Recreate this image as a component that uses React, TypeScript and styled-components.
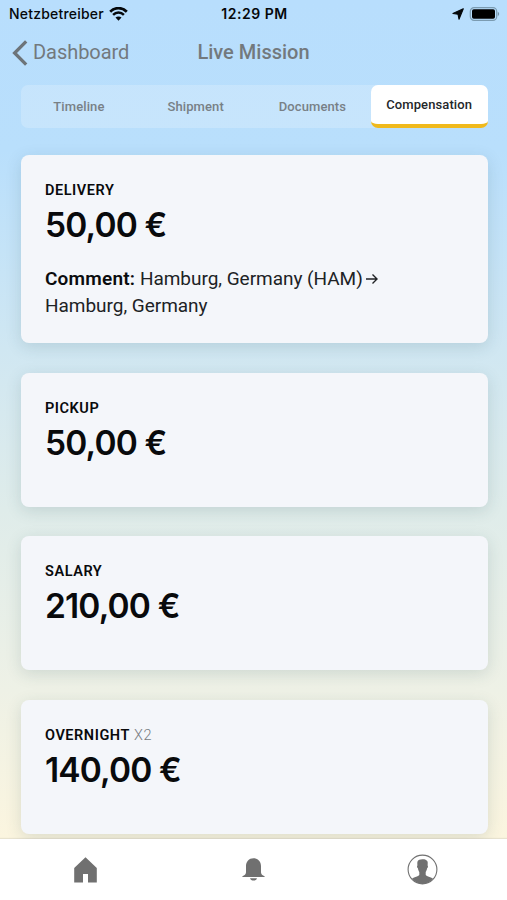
import React from 'react';
import styled, { createGlobalStyle } from 'styled-components';

const GlobalStyle = createGlobalStyle`
  * { box-sizing: border-box; }
  html, body { margin: 0; padding: 0; overflow: hidden; }
  button { border: 0; padding: 0; margin: 0; background: none; font: inherit; color: inherit; }
`;

const Screen = styled.div`
  display: flex;
  flex-direction: column;
  width: 507px;
  height: 900px;
  overflow: hidden;
  font-family: Roboto, "Liberation Sans", sans-serif;
  color: #090a0c;
  background: linear-gradient(180deg, #b8defd 0, #b9dffc 150px, #d0e7f2 350px, #dfecea 510px, #eef1e6 690px, #fbf5df 838px);
`;

const StatusBar = styled.div`
  display: grid;
  grid-template-columns: 1fr auto 1fr;
  align-items: center;
  flex: none;
  height: 28px;
  padding: 0 7px 0 9px;
  font-family: Inter, sans-serif;
  font-size: 14px;
  line-height: 28px;
  color: #05080b;
`;

const Carrier = styled.div`
  display: flex;
  align-items: center;
  gap: 5px;
  letter-spacing: 0.2px;
  font-weight: 450;
`;

const Clock = styled.div`
  font-weight: 600;
  letter-spacing: 0.5px;
`;

const Indicators = styled.div`
  display: flex;
  align-items: center;
  justify-content: flex-end;
  gap: 5px;
`;

const NavBar = styled.header`
  display: grid;
  grid-template-columns: 1fr auto 1fr;
  align-items: center;
  flex: none;
  height: 49px;
  padding: 0 12px;
  font-size: 20px;
  line-height: 49px;
  color: #73797d;
`;

const Back = styled.button`
  display: flex;
  align-items: center;
  gap: 5px;
  letter-spacing: -0.05px;
`;

const Title = styled.h1`
  margin: 0;
  font-size: 20px;
  font-weight: 500;
  letter-spacing: 0;
`;

const Tabs = styled.nav`
  display: grid;
  grid-template-columns: repeat(4, 1fr);
  flex: none;
  height: 43px;
  margin: 8px 19.5px 0 20.5px;
  border-radius: 7px;
  background: rgba(255, 255, 255, 0.2);
`;

const Tab = styled.button<{ $active?: boolean }>`
  height: 43px;
  border-radius: 7px;
  font-size: 13px;
  font-weight: 500;
  letter-spacing: 0.1px;
  line-height: 42px;
  color: #788086;
  ${({ $active }) => $active && `
    color: #24272a;
    line-height: 40px;
    background: #fff;
    border-bottom: 4px solid #f0b91c;
  `}
`;

const CardList = styled.main`
  display: flex;
  flex-direction: column;
  flex: 1;
  min-height: 0;
  gap: 29.7px;
  padding: 27px 19.5px 0 20.5px;
  overflow: hidden;
`;

const Card = styled.section<{ $tall?: boolean }>`
  flex: none;
  height: ${({ $tall }) => ($tall ? 188 : 134)}px;
  padding: 26px 24.5px 0;
  border-radius: 8px;
  background: #f4f6fa;
  box-shadow: 0 4px 16px rgba(35, 75, 80, 0.15);
`;

const Label = styled.h2`
  margin: 0;
  font-size: 14.5px;
  font-weight: 600;
  line-height: 20px;
  letter-spacing: 0.55px;
  white-space: pre;
`;

const Count = styled.span`
  font-weight: 300;
  color: #777b80;
`;

const Amount = styled.div`
  font-family: Inter, Roboto, sans-serif;
  font-size: 33.5px;
  font-weight: 600;
  line-height: 48px;
  letter-spacing: -0.85px;
`;

const Comment = styled.p`
  margin: 16px 0 0;
  width: 350px;
  font-size: 19px;
  line-height: 27px;
  letter-spacing: -0.03px;
  color: #202225;
`;

const CommentLabel = styled.b`
  font-weight: 600;
  letter-spacing: 0.2px;
  color: #0b0c0e;
`;

const TabBar = styled.footer`
  display: grid;
  grid-template-columns: repeat(3, 1fr);
  flex: none;
  height: 61px;
  padding-left: 1px;
  background: #fff;
  box-shadow: 0 -1px 1px rgba(100, 100, 100, 0.12);
  z-index: 1;
`;

const TabBarItem = styled.button`
  display: flex;
  align-items: center;
  justify-content: center;
  color: #707070;
`;

const ArrowGlyph = styled.svg`
  width: 12px;
  height: 12px;
  margin-left: -1px;
  vertical-align: 0;
`;

const Wifi = () => (
  <svg width="19" height="14" viewBox="0 0 19 14" fill="none" stroke="currentColor">
    <path d="M1.2 4.8C6-.1 13-.1 17.8 4.8" strokeWidth="2.7" />
    <path d="M4.1 7.9C7.2 4.8 11.8 4.8 14.9 7.9" strokeWidth="2.5" />
    <path d="M9.5 13.8 6.5 10.6C8.2 9 10.8 9 12.5 10.6Z" fill="currentColor" stroke="none" />
  </svg>
);

const Location = () => (
  <svg width="12" height="12" viewBox="0 0 12 12">
    <path d="M11.3.7 7 11.2 6 6.200.9 5.500Z" fill="currentColor" stroke="currentColor" strokeWidth="1.100" strokeLinejoin="round" />
  </svg>
);

const Battery = () => (
  <svg width="31" height="14" viewBox="0 0 31 14">
    <rect x="1.3" y=".6" width="26.4" height="12.8" rx="3.8" fill="none" stroke="#7b9bb1" strokeWidth="1.2" />
    <rect x="3" y="2.3" width="23" height="9.4" rx="1.8" />
    <path d="M28.8 4.8Q31.6 7 28.8 9.2Z" fill="#7190a5" />
  </svg>
);

const Chevron = () => (
  <svg width="16" height="26" viewBox="0 0 16 26" fill="none" stroke="#6d7479" strokeWidth="3.3">
    <path d="M14.2 1.4 2.6 13l11.6 11.6" />
  </svg>
);

const Home = () => (
  <svg width="23" height="26" viewBox="0 0 23 26">
    <path d="M11.5.3 22.8 11v14.5H14V17H9v8.5H.2V11Z" fill="currentColor" />
  </svg>
);

const Bell = () => (
  <svg width="23" height="23" viewBox="0 0 23 23" fill="currentColor">
    <path d="M11.5.3C7 .3 4 3.7 4 8v6.3c0 2-1.4 3-3.6 4v.7h22.2v-.7c-2.2-1-3.6-2-3.6-4V8c0-4.3-3-7.7-7.5-7.7Z" />
    <path d="M8 20.2h7c-.5 1.5-1.8 2.4-3.5 2.4S8.500 21.700 8 20.2Z" />
  </svg>
);

const Profile = () => (
  <svg width="31" height="31" viewBox="0 0 31 31">
    <circle cx="15.5" cy="15.5" r="14.4" fill="#fff" stroke="currentColor" strokeWidth="1.1" />
    <path d="M10.3 9.2C10 6.5 12 5.2 14 5.4c4-.8 7.3.7 6.7 4.3l-.1 1.8c.7.3.4 2.4-.5 2.8-.3 1.7-.7 2.7-1.4 3.6v3c1.2 1.5 4.7 1.7 7.3 3.6C23.6 28 20 29.9 15.5 29.9S7.4 28 5 24.5c2.6-1.9 6.1-2.1 7.3-3.6v-3c-.7-.9-1.1-1.9-1.4-3.6-.9-.4-1.2-2.5-.5-2.8Z" fill="currentColor" />
  </svg>
);

const tabs = ['Timeline', 'Shipment', 'Documents', 'Compensation'];

const payments = [
  { label: 'DELIVERY', amount: '50,00 €', route: ['Hamburg, Germany (HAM)', 'Hamburg, Germany'] },
  { label: 'PICKUP', amount: '50,00 €' },
  { label: 'SALARY', amount: '210,00 €' },
  { label: 'OVERNIGHT', amount: '140,00 €', count: 'X2' },
];

export default function App() {
  return (
    <>
      <GlobalStyle />
      <Screen>
        <StatusBar>
          <Carrier>Netzbetreiber <Wifi /></Carrier>
          <Clock>12:29 PM</Clock>
          <Indicators><Location /><Battery /></Indicators>
        </StatusBar>
        <NavBar>
          <Back><Chevron />Dashboard</Back>
          <Title>Live Mission</Title>
        </NavBar>
        <Tabs>
          {tabs.map((tab) => <Tab key={tab} $active={tab === 'Compensation'}>{tab}</Tab>)}
        </Tabs>
        <CardList>
          {payments.map(({ label, amount, count, route }) => (
            <Card key={label} $tall={!!route}>
              <Label>{label}{count && <Count> {count}</Count>}</Label>
              <Amount>{amount}</Amount>
              {route && (
                <Comment>
                  <CommentLabel>Comment:</CommentLabel> {route[0]}{' '}
                  <ArrowGlyph viewBox="0 0 12 12" fill="none" stroke="currentColor" strokeWidth="1.4">
                    <path d="M0 6h11M6.5 1.5 11 6l-4.5 4.5" />
                  </ArrowGlyph>
                  <br />{route[1]}
                </Comment>
              )}
            </Card>
          ))}
        </CardList>
        <TabBar>
          <TabBarItem aria-label="Home"><Home /></TabBarItem>
          <TabBarItem aria-label="Notifications"><Bell /></TabBarItem>
          <TabBarItem aria-label="Profile"><Profile /></TabBarItem>
        </TabBar>
      </Screen>
    </>
  );
}
